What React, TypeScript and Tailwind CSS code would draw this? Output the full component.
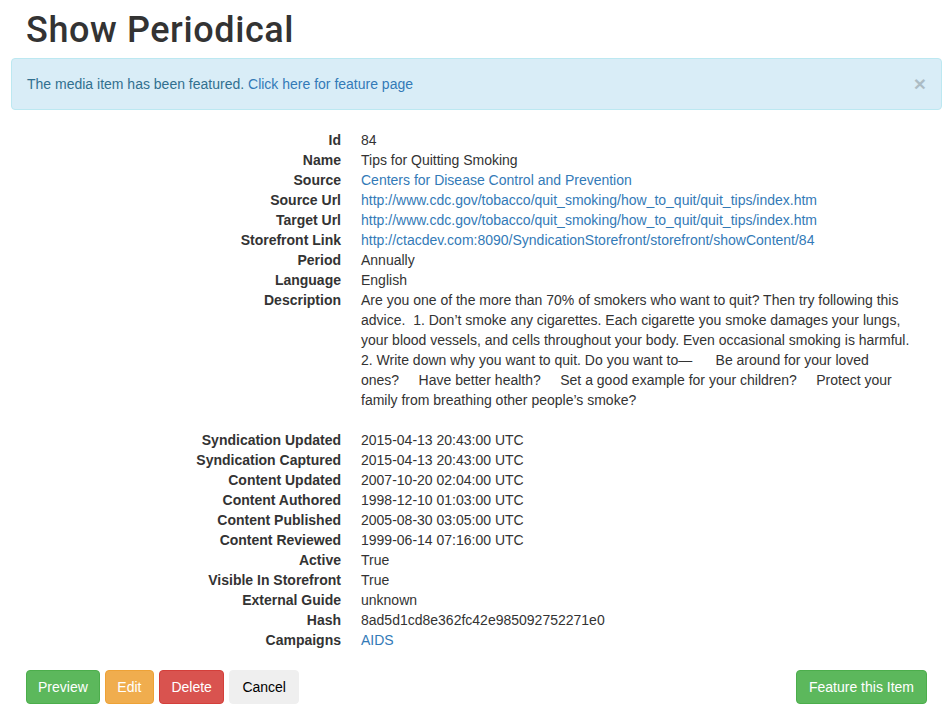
const fields: { label: string; value: string; link?: boolean }[] = [
  { label: "Id", value: "84" },
  { label: "Name", value: "Tips for Quitting Smoking" },
  { label: "Source", value: "Centers for Disease Control and Prevention", link: true },
  { label: "Source Url", value: "http://www.cdc.gov/tobacco/quit_smoking/how_to_quit/quit_tips/index.htm", link: true },
  { label: "Target Url", value: "http://www.cdc.gov/tobacco/quit_smoking/how_to_quit/quit_tips/index.htm", link: true },
  { label: "Storefront Link", value: "http://ctacdev.com:8090/SyndicationStorefront/storefront/showContent/84", link: true },
  { label: "Period", value: "Annually" },
  { label: "Language", value: "English" },
];

const description = [
  "Are you one of the more than 70% of smokers who want to quit? Then try following this",
  "advice.  1. Don\u2019t smoke any cigarettes. Each cigarette you smoke damages your lungs,",
  "your blood vessels, and cells throughout your body. Even occasional smoking is harmful.",
  "2. Write down why you want to quit. Do you want to\u2014      Be around for your loved",
  "ones?     Have better health?     Set a good example for your children?     Protect your",
  "family from breathing other people\u2019s smoke?",
];

const details: { label: string; value: string; link?: boolean }[] = [
  { label: "Syndication Updated", value: "2015-04-13 20:43:00 UTC" },
  { label: "Syndication Captured", value: "2015-04-13 20:43:00 UTC" },
  { label: "Content Updated", value: "2007-10-20 02:04:00 UTC" },
  { label: "Content Authored", value: "1998-12-10 01:03:00 UTC" },
  { label: "Content Published", value: "2005-08-30 03:05:00 UTC" },
  { label: "Content Reviewed", value: "1999-06-14 07:16:00 UTC" },
  { label: "Active", value: "True" },
  { label: "Visible In Storefront", value: "True" },
  { label: "External Guide", value: "unknown" },
  { label: "Hash", value: "8ad5d1cd8e362fc42e985092752271e0" },
  { label: "Campaigns", value: "AIDS", link: true },
];

function Row({ label, value, link }: { label: string; value: string; link?: boolean }) {
  return (
    <>
      <dt className="text-right font-bold whitespace-nowrap">{label}</dt>
      <dd className={link ? "text-[#337ab7] whitespace-nowrap" : "whitespace-nowrap"}>{value}</dd>
    </>
  );
}

export default function App() {
  return (
    <div className="w-[948px] min-h-[715px] bg-white text-[#333] text-[14px] leading-[20px] font-['Liberation_Sans',Arial,sans-serif]">
      <h1 className="ml-[26px] pt-[11px] mb-[7px] text-[36px] leading-[39.6px] font-medium font-['Roboto',sans-serif] tracking-[0.6px]">
        Show Periodical
      </h1>

      {/* Flash message */}
      <div className="ml-[11px] mr-[6px] mb-[20px] flex items-center justify-between rounded-[4px] border border-[#bce8f1] bg-[#d9edf7] py-[15px] pl-[15px] pr-[15px] text-[#31708f]">
        <div>
          The media item has been featured.{" "}
          <a className="text-[#337ab7]">Click here for feature page</a>
        </div>
        <span className="text-[21px] font-bold leading-[20px] text-black opacity-20">×</span>
      </div>

      <dl className="grid grid-cols-[160px_1fr] gap-x-[20px] pl-[181px]">
        {fields.map((f) => (
          <Row key={f.label} {...f} />
        ))}
        <dt className="text-right font-bold">Description</dt>
        <dd className="mb-[20px]">
          {description.map((line, i) => (
            <div key={i} className="whitespace-pre">
              {line}
            </div>
          ))}
        </dd>
        {details.map((f) => (
          <Row key={f.label} {...f} />
        ))}
      </dl>

      <div className="mt-[20px] flex items-center justify-between pl-[26px] pr-[21px]">
        <div className="flex gap-[5px]">
          <button className="rounded-[4px] border border-[#4cae4c] bg-[#5cb85c] px-[11px] py-[6px] text-white">Preview</button>
          <button className="rounded-[4px] border border-[#eea236] bg-[#f0ad4e] px-[11.5px] py-[6px] text-white">Edit</button>
          <button className="rounded-[4px] border border-[#d43f3a] bg-[#d9534f] px-[11.5px] py-[6px] text-white">Delete</button>
          <button className="rounded-[4px] border border-[#efefef] bg-[#efefef] px-[12px] py-[6px] text-black">Cancel</button>
        </div>
        <button className="rounded-[4px] border border-[#4cae4c] bg-[#5cb85c] px-[12px] py-[6px] text-white">Feature this Item</button>
      </div>
    </div>
  );
}
